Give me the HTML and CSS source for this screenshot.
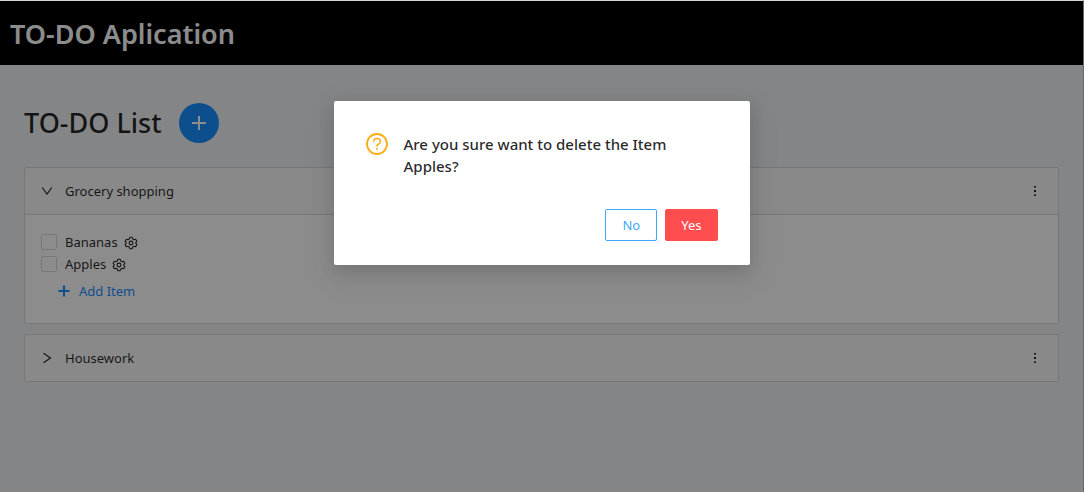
FILE: index.html
```html
<!DOCTYPE html>
<html lang="en">
<head>
<meta charset="utf-8">
<meta name="viewport" content="width=device-width, initial-scale=1">
<title>TO-DO Aplication</title>
<link rel="stylesheet" href="styles.css">
</head>
<body>
<div class="app">
  <header class="app-header"><h1 class="app-title">TO-DO Aplication</h1></header>
  <main class="content">
    <div class="list-head">
      <h2 class="list-title">TO-DO List</h2>
      <button class="add-list" type="button" aria-label="Add list">
        <svg width="16" height="16" viewBox="0 0 16 16" fill="none" stroke="currentColor" stroke-width="2"><path d="M8 1v14M1 8h14"/></svg>
      </button>
    </div>

    <section class="panel">
      <div class="panel-head">
        <button class="panel-toggle" type="button" aria-expanded="true">
          <svg width="12" height="12" viewBox="0 0 12 12" fill="none" stroke="currentColor" stroke-width="1.200"><path d="M1.200 2.500 6 9l4.800-6.500"/></svg>
          <span>Grocery shopping</span>
        </button>
        <button class="more" type="button" aria-label="Grocery shopping options">
          <svg width="12" height="12" viewBox="0 0 12 12" fill="currentColor"><path d="M5 1h2v1.500H5zM5 5h2v2H5zM5 9.500h2V11H5z"/></svg>
        </button>
      </div>
      <div class="panel-body">
        <div class="item">
          <input class="check" type="checkbox" id="bananas"><label class="item-label" for="bananas">Bananas</label>
          <button class="gear" type="button" aria-label="Bananas settings">
            <svg width="14" height="14" viewBox="0 0 14 14" fill="none" stroke="currentColor" stroke-width="1.100" stroke-linejoin="round"><path d="M5.800 1.300h2.400l.5 1.600 1.300.8 1.700-.4 1.200 2.100L11.800 6.600v.8l1.100 1.200-1.200 2.100-1.700-.4-1.300.8-.5 1.600H5.800l-.5-1.600-1.300-.8-1.700.4-1.200-2.100 1.100-1.200v-.8L1.100 5.400l1.200-2.100 1.700.4 1.300-.8z"/><circle cx="7" cy="7" r="1.900"/></svg>
          </button>
        </div>
        <div class="item">
          <input class="check" type="checkbox" id="apples"><label class="item-label" for="apples">Apples</label>
          <button class="gear" type="button" aria-label="Apples settings">
            <svg width="14" height="14" viewBox="0 0 14 14" fill="none" stroke="currentColor" stroke-width="1.100" stroke-linejoin="round"><path d="M5.800 1.300h2.400l.5 1.600 1.300.8 1.700-.4 1.200 2.100L11.800 6.600v.8l1.100 1.200-1.200 2.100-1.700-.4-1.300.8-.5 1.600H5.800l-.5-1.600-1.300-.8-1.700.4-1.200-2.100 1.100-1.200v-.8L1.100 5.400l1.200-2.100 1.700.4 1.300-.8z"/><circle cx="7" cy="7" r="1.900"/></svg>
          </button>
        </div>
        <button class="add-item" type="button">
          <svg width="14" height="14" viewBox="0 0 14 14" fill="none" stroke="currentColor" stroke-width="2"><path d="M7 1.500v11M1.500 7h11"/></svg>
          <span>Add Item</span>
        </button>
      </div>
    </section>

    <section class="panel">
      <div class="panel-head">
        <button class="panel-toggle" type="button" aria-expanded="false">
          <svg width="12" height="12" viewBox="0 0 12 12" fill="none" stroke="currentColor" stroke-width="1.200"><path d="M2.500 1.200 9.500 6l-7 4.800"/></svg>
          <span>Housework</span>
        </button>
        <button class="more" type="button" aria-label="Housework options">
          <svg width="12" height="12" viewBox="0 0 12 12" fill="currentColor"><path d="M5 1h2v1.500H5zM5 5h2v2H5zM5 9.500h2V11H5z"/></svg>
        </button>
      </div>
    </section>
  </main>

  <div class="mask">
    <div class="dialog" role="dialog" aria-modal="true" aria-labelledby="dialog-title">
      <div class="dialog-body">
        <svg class="question" width="22" height="22" viewBox="0 0 22 22" fill="none" stroke="currentColor" stroke-width="1.800"><circle cx="11" cy="11" r="10"/><path stroke-width="1.500" d="M7.600 8.700C7.600 6.700 9 5.600 11 5.600s3.400 1.200 3.400 2.900c0 1.500-1 2.300-2.100 2.800-.9.400-1.300.8-1.300 1.500v.9"/><path d="M10.100 15.900h1.800"/></svg>
        <h3 class="dialog-title" id="dialog-title">Are you sure want to delete the Item Apples?</h3>
      </div>
      <div class="dialog-actions">
        <button class="btn btn-no" type="button">No</button>
        <button class="btn btn-yes" type="button">Yes</button>
      </div>
    </div>
  </div>
</div>
</body>
</html>
```
FILE: styles.css
```css
* { box-sizing: border-box; }

body {
  margin: 0;
  min-height: 100vh;
  display: flex;
  border-top: 1px solid #d4d8da;
  border-right: 1px solid #6c6c6c;
  font: 13px/22px "Segoe UI", "Noto Sans", sans-serif;
  color: rgba(0, 0, 0, 0.85);
}

button {
  margin: 0;
  padding: 0;
  border: 0;
  background: none;
  font: inherit;
  color: inherit;
  cursor: pointer;
}

svg { display: block; flex: none; }

h1, h2, h3 { margin: 0; }

.app {
  position: relative;
  flex: 1;
  background: #f0f2f5;
}

.app-header {
  display: flex;
  align-items: center;
  height: 64px;
  padding: 2px 10px 0;
  background: #000;
}

.app-title {
  font-size: 27px;
  line-height: 40px;
  font-weight: 600;
  color: #fff;
}

.content { padding: 38px 24px 24px; }

.list-head {
  display: flex;
  align-items: center;
  gap: 17px;
  margin-bottom: 24px;
}

.list-title {
  font-size: 27px;
  line-height: 38px;
  font-weight: 500;
}

.add-list {
  display: grid;
  place-items: center;
  width: 40px;
  height: 40px;
  border-radius: 50%;
  background: #1890ff;
  color: #fff;
}

.panel {
  margin-bottom: 10px;
  border: 1px solid #d9d9d9;
  border-radius: 2px;
  background: #fafafa;
}

.panel-head {
  display: flex;
  align-items: center;
  padding: 12px 16px;
}

.panel-toggle {
  display: flex;
  flex: 1;
  align-items: center;
  gap: 12px;
  text-align: left;
}

.more { padding: 0 1px; }

.panel-body {
  padding: 16px;
  border-top: 1px solid #d9d9d9;
  background: #fff;
}

.item {
  display: flex;
  align-items: center;
}

.check {
  appearance: none;
  width: 16px;
  height: 16px;
  margin: 0;
  border: 1px solid #d9d9d9;
  border-radius: 2px;
  background: #fff;
}

.item-label { padding: 0 6px 0 8px; }

.gear { padding-top: 1px; }

.add-item {
  display: flex;
  align-items: center;
  gap: 8px;
  height: 32px;
  padding: 0 16px;
  color: #1890ff;
}

.mask {
  position: absolute;
  inset: 0;
  display: flex;
  align-items: flex-start;
  justify-content: center;
  padding-top: 100px;
  background: rgba(0, 0, 0, 0.45);
}

.dialog {
  width: 416px;
  max-width: 100%;
  padding: 32px 32px 24px;
  border-radius: 2px;
  background: #fff;
  box-shadow: 0 6px 16px rgba(0, 0, 0, 0.12), 0 9px 28px 8px rgba(0, 0, 0, 0.05);
}

.dialog-body {
  display: flex;
  align-items: flex-start;
  gap: 16px;
}

.question { color: #faad14; }

.dialog-title {
  font-size: 15px;
  line-height: 22px;
  font-weight: 500;
}

.dialog-actions {
  display: flex;
  justify-content: flex-end;
  gap: 8px;
  margin-top: 32px;
}

.btn {
  height: 32px;
  padding: 0 15px;
  border: 1px solid;
  border-radius: 2px;
}

.btn-no {
  padding: 0 16px;
  border-color: #40a9ff;
  color: #40a9ff;
}

.btn-yes {
  border-color: #ff4d4f;
  background: #ff4d4f;
  color: #fff;
}
```
